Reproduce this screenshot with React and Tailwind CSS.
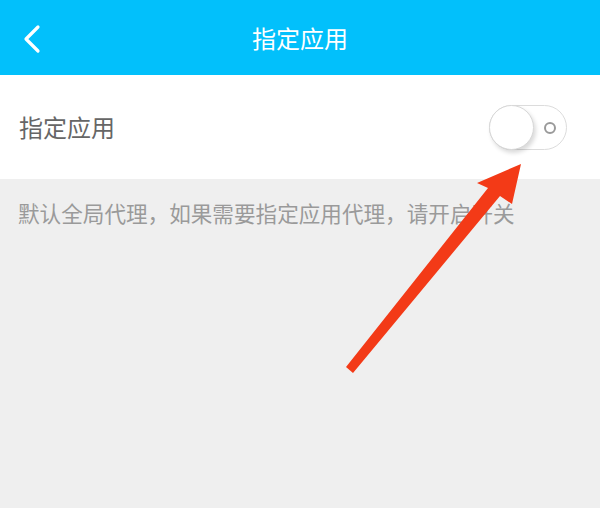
// App.jsx
// Proxy settings screen: "指定应用" toggle with annotation arrow

const cjk = { fontFamily: '"Noto Sans CJK SC", "Noto Sans", sans-serif' };

function Toggle() {
  return (
    <div className="relative w-[78px] h-[45px] rounded-full border border-[#dcdcdc] bg-white">
      {/* knob */}
      <div className="absolute left-[-1px] top-[-1px] w-[45px] h-[45px] rounded-full bg-white border border-[#d8d8d8] shadow-[2px_3px_4px_rgba(0,0,0,0.15)]" />
      {/* off indicator */}
      <div className="absolute right-[10px] top-[16px] w-[12px] h-[12px] rounded-full border-2 border-[#9a9a9a]" />
    </div>
  );
}

export default function App() {
  return (
    <div className="relative w-[600px] h-[508px] bg-[#efefef] overflow-hidden" style={cjk}>
      {/* Header */}
      <div className="relative h-[75px] bg-[#02c0fb] flex items-center justify-center">
        <svg className="absolute left-[20px] top-[24px]" width="24" height="30" viewBox="0 0 24 30">
          <path d="M18 3 L6 15 L18 27" fill="none" stroke="#fff" strokeWidth="3.2" strokeLinecap="round" strokeLinejoin="round" />
        </svg>
        <h1 className="text-white text-[24px] leading-none">指定应用</h1>
      </div>

      {/* Switch row */}
      <div className="h-[104px] bg-white flex items-center justify-between pl-[19px] pr-[33px]">
        <span className="text-[#666] text-[24px] leading-none">指定应用</span>
        <Toggle />
      </div>

      {/* Description */}
      <p className="pl-[18px] pt-[21px] text-[#9a9a9a] text-[21.6px] leading-[26px] whitespace-nowrap">
        默认全局代理，如果需要指定应用代理，请开启开关
      </p>

      {/* Annotation arrow */}
      <svg className="absolute inset-0 pointer-events-none" width="600" height="508" viewBox="0 0 600 508">
        <polygon
          points="346,367 353,373 500,196 512,204 521,164 477,183 488,188"
          fill="#f33a17"
        />
      </svg>
    </div>
  );
}
